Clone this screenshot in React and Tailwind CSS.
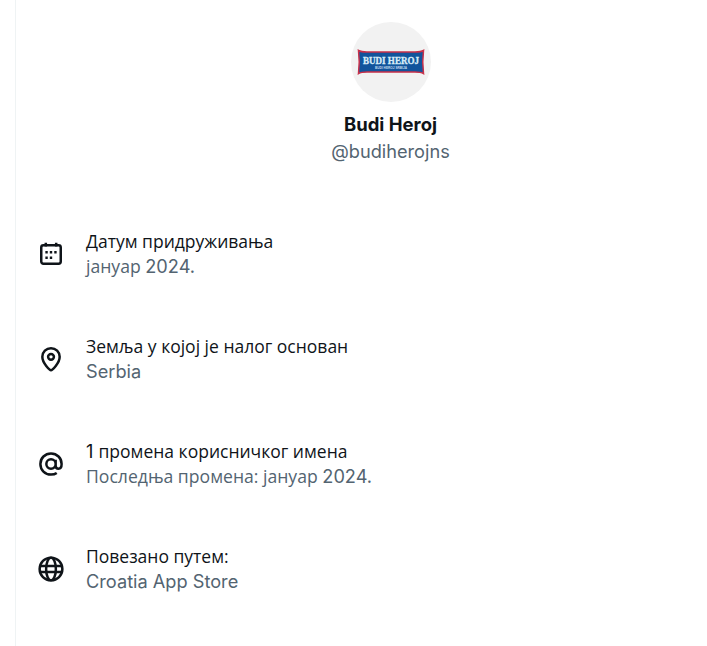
const rows = [
  {
    icon: 'calendar',
    title: ['', 'Датум придруживања'],
    sub: ['јануар ', '2024.'],
  },
  {
    icon: 'pin',
    title: ['', 'Земља у којој је налог основан'],
    sub: ['', 'Serbia'],
  },
  {
    icon: 'at',
    title: ['1 ', 'промена корисничког имена'],
    sub: ['Последња промена: јануар ', '2024.'],
  },
  {
    icon: 'globe',
    title: ['', 'Повезано путем:'],
    sub: ['', 'Croatia App Store'],
  },
]

function RowIcon({ name }) {
  return (
    <svg viewBox="0 0 24 24" className="w-[26px] h-[26px] shrink-0 text-[#0f1419]" fill="none" stroke="currentColor" strokeWidth="2.3">
      {name === 'calendar' && (
        <>
          <rect x="3" y="4" width="18" height="17" rx="2" />
          <path d="M7.2 1.6V5M16.8 1.6V5" />
          <path d="M6.8 10.4h2.2M10.9 10.4h2.2M15 10.4h2.2M6.8 15.4h2.2M10.9 15.4h2.2" strokeWidth="2.3" />
        </>
      )}
      {name === 'pin' && (
        <>
          <path d="M12 22.4c-1 0-8-6.4-8-12.4a8 8 0 0 1 16 0c0 6-7 12.4-8 12.4z" />
          <circle cx="12" cy="10" r="2.7" />
        </>
      )}
      {name === 'at' && (
        <path d="M16.3 12a4.3 4.3 0 1 1-8.6 0 4.3 4.3 0 0 1 8.6 0zM16.3 8v5.5c0 1.7 1.2 2.8 2.6 2.8 1.9 0 2.9-2 2.9-4.3 0-5.5-4.3-9.7-9.8-9.7S2.2 6.5 2.2 12s4.3 9.8 9.8 9.8c2 0 3.9-.5 5.3-1.5" />
      )}
      {name === 'globe' && (
        <>
          <circle cx="12" cy="12" r="10.5" />
          <ellipse cx="12" cy="12" rx="4.5" ry="10.5" />
          <path d="M1.5 9.3h21M1.5 14.8h21" />
        </>
      )}
    </svg>
  )
}

function Logo() {
  return (
    <svg viewBox="0 0 68 26" className="w-[68px] h-[26px] overflow-visible">
      <path d="M1.5 1.5Q4 3 10 3H58Q64 3 66.5 1.5Q65 13 66.5 24.5Q64 23 58 23H10Q4 23 1.5 24.5Q3 13 1.5 1.5Z" fill="#12549c" stroke="#c8304a" strokeWidth="1.5" />
      <text x="34" y="15" textAnchor="middle" textLength="56" lengthAdjust="spacingAndGlyphs" fontSize="10.8" fontWeight="700" fill="#d8ecf8" stroke="#d8ecf8" strokeWidth="0.35" fontFamily="Liberation Serif, serif">BUDI HEROJ</text>
      <text x="34" y="19.6" textAnchor="middle" textLength="32" lengthAdjust="spacingAndGlyphs" fontSize="3" fontWeight="700" fill="#c4dcef" fontFamily="Liberation Sans, sans-serif">BUDI HEROJ SRBIJA</text>
    </svg>
  )
}

export default function App() {
  return (
    <div className="h-[646px] w-[707px] overflow-hidden bg-white">
      <div className="ml-[15px] w-[750px] h-full border-l border-[#eff3f4]">
        <div className="flex flex-col items-center pt-[22px] font-['Inter',sans-serif]">
          <div className="w-20 h-20 rounded-full bg-[#f2f2f2] flex items-center justify-center">
            <Logo />
          </div>
          <p className="mt-[10px] text-[18.5px] leading-[24px] font-bold text-[#0f1419]">Budi Heroj</p>
          <p className="mt-[3px] text-[18.2px] leading-[24px] text-[#536471]">@budiherojns</p>
        </div>
        <div className="mt-[66px] flex flex-col gap-[55px] pl-[22px]">
          {rows.map((row) => (
            <div key={row.icon} className="flex items-center gap-[22px]">
              <RowIcon name={row.icon} />
              <div className="leading-[25px] text-[18.2px] font-['Inter',sans-serif]">
                <p className="text-[#0f1419]">
                  {row.title[0]}
                  <span className="text-[17.5px] font-['Open_Sans',sans-serif]">{row.title[1]}</span>
                </p>
                <p className="text-[#536471]">
                  <span className="text-[17.6px] font-['Open_Sans',sans-serif]">{row.sub[0]}</span>
                  {row.sub[1]}
                </p>
              </div>
            </div>
          ))}
        </div>
      </div>
    </div>
  )
}
